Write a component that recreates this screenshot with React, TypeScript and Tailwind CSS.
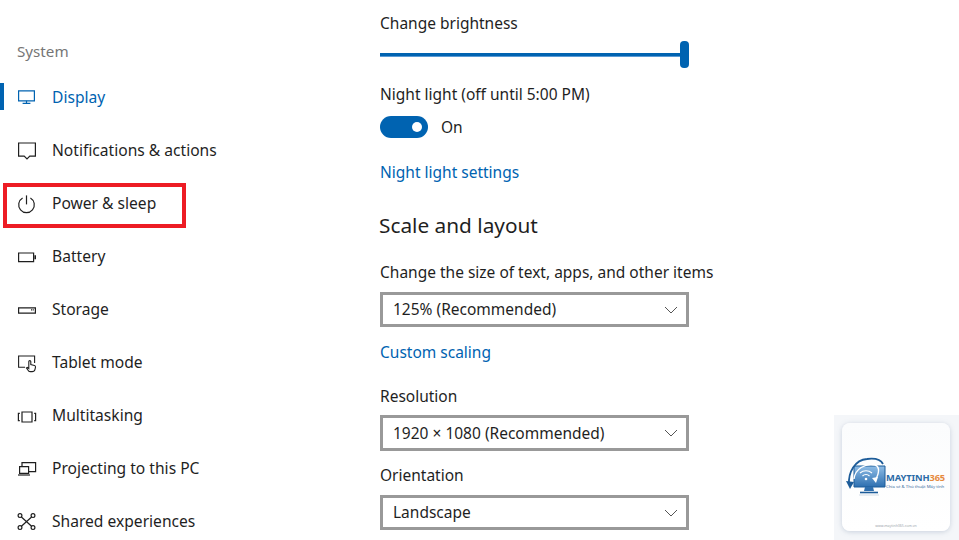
import { ReactNode } from "react";

const navIcon = "w-5 h-5 shrink-0 fill-none stroke-current";

function DisplayIcon() {
  return (
    <svg viewBox="0 0 20 20" className={navIcon} strokeWidth="1.2">
      <path d="M1.6 2.8h15.8v10H1.6z" />
      <path d="M9.5 12.8v2.6M5.6 15.4h7.8" />
    </svg>
  );
}

function NotificationIcon() {
  return (
    <svg viewBox="0 0 20 20" className={navIcon} strokeWidth="1.2">
      <path d="M1.6 2h16.8v13.2h-5.6L10 18l-2.8-2.8H1.6z" />
    </svg>
  );
}

function PowerIcon() {
  return (
    <svg viewBox="0 0 20 20" className={navIcon} strokeWidth="1.2">
      <path d="M5.6 4a7.8 7.8 0 1 0 7.8 0" />
      <path d="M9.5 1.4v9" />
    </svg>
  );
}

function BatteryIcon() {
  return (
    <svg viewBox="0 0 20 20" className={navIcon} strokeWidth="1.2">
      <path d="M1.6 6h15v8.6h-15z" />
      <path d="M18.2 8.2v4" strokeWidth="1.6" />
    </svg>
  );
}

function StorageIcon() {
  return (
    <svg viewBox="0 0 20 20" className={navIcon} strokeWidth="1.2">
      <path d="M1.6 7.8h16.8v5.4H1.6z" />
      <path d="M14 9.8h1.4M16 9.8h.8" />
    </svg>
  );
}

function TabletIcon() {
  return (
    <svg viewBox="0 0 20 20" className={navIcon} strokeWidth="1.1">
      <path d="M8 14.2H1.6V3h16v7" />
      <path d="M11.6 18l-2.2-3 1-.6 1.4 1.1V8.6a1 1 0 0 1 2 0v3l3.6.9c.8.2 1.2.8 1.1 1.6l-.5 2.2a3 3 0 0 1-2.9 2.3h-1.4a2.8 2.8 0 0 1-2.1-.6z" />
    </svg>
  );
}

function MultitaskIcon() {
  return (
    <svg viewBox="0 0 20 20" className={navIcon} strokeWidth="1.2">
      <path d="M5 6h10v10H5z" />
      <path d="M2.8 7.4H1.4v7.2h1.4M17.2 7.4h1.4v7.2h-1.4" />
    </svg>
  );
}

function ProjectIcon() {
  return (
    <svg viewBox="0 0 20 20" className={navIcon} strokeWidth="1.2">
      <path d="M5 7V3.6h13.6v9H12" />
      <path d="M2.6 7.6h9v6.8h-9z" />
      <path d="M1 16h12" />
    </svg>
  );
}

function SharedIcon() {
  return (
    <svg viewBox="0 0 20 20" className={navIcon} strokeWidth="1.2">
      <circle cx="3" cy="3.6" r="1.9" />
      <circle cx="16" cy="3.6" r="1.9" />
      <circle cx="3" cy="15.6" r="1.9" />
      <circle cx="16" cy="15.6" r="1.9" />
      <path d="M4.4 5l10.2 9.2M14.6 5L4.4 14.2" />
    </svg>
  );
}

function NavItem({ icon, label, active }: { icon: ReactNode; label: string; active?: boolean }) {
  return (
    <div className={`relative h-[53px] flex items-center gap-[15px] pl-[17px] text-[15.6px] ${active ? "text-[#0063b1]" : "text-[#1f1f1f]"}`}>
      {active && <div className="absolute left-0 top-[12px] w-[4px] h-[27px] bg-[#0063b1]" />}
      {icon}
      <span>{label}</span>
    </div>
  );
}

function Select({ value, className }: { value: string; className: string }) {
  return (
    <div className={`w-[309px] border-[3px] border-[#999999] flex items-center justify-between pl-[10px] pr-[8px] text-[#1f1f1f] ${className}`}>
      <span className="-mt-[1px]">{value}</span>
      <svg viewBox="0 0 14 8" className="w-[14px] h-[8px] fill-none stroke-[#555555]" strokeWidth="1">
        <path d="M1 1l6 6 6-6" />
      </svg>
    </div>
  );
}

function Watermark() {
  return (
    <div className="absolute right-0 bottom-0 w-[125px] h-[125px] bg-[#f4f6f9] p-[8px]">
      <div className="relative w-[108px] h-[108px] rounded-[8px] bg-gradient-to-b from-[#fbfcfd] to-[#ffffff] shadow-[0_1px_5px_rgba(120,140,170,0.35)]">
        <svg viewBox="0 0 45 45" className="absolute left-[3px] top-[32px] w-[45px] h-[45px] fill-none">
          <defs>
            <linearGradient id="screen" x1="0" y1="0" x2="0" y2="1">
              <stop offset="0" stopColor="#8fbde6" />
              <stop offset="1" stopColor="#2d6fb0" />
            </linearGradient>
          </defs>
          <path d="M9 11h31v21H9z" fill="url(#screen)" stroke="#1d5c99" strokeWidth="1" />
          <path d="M20 32h8l1 4H19z" fill="#2f6fae" />
          <path d="M15 37.5h18" stroke="#1d5c99" strokeWidth="1.6" />
          <path d="M14 40h20" stroke="#dfe5ec" strokeWidth="1.4" />
          <path d="M4 30C3 17 10 5 22 4c8-1 14 1 16 5" stroke="#1d5c99" strokeWidth="1.8" />
          <path d="M1 26l8 1-4 7z" fill="#1d5c99" />
          <path d="M9 24c1-10 11-16 21-14 4 1 5 6 1 14" stroke="#ffffff" strokeWidth="1.4" />
          <path d="M27 23l6-1-2 6z" fill="#ffffff" />
          <path d="M15 18a9 9 0 0 1 12 0M17.5 21a5 5 0 0 1 7 0" stroke="#ffffff" strokeWidth="1.1" />
          <circle cx="21" cy="24" r="1.3" fill="#ffffff" />
        </svg>
        <div className="absolute left-[44px] top-[48px] whitespace-nowrap text-[9.3px] leading-[13px] font-bold tracking-[-0.1px] text-[#2a6aa6]">
          MAYTINH<span className="text-[#e68a3e]">365</span>
        </div>
        <div className="absolute left-[44px] top-[60px] whitespace-nowrap text-[4.3px] leading-[7px] text-[#3f6f9e]">
          Chia sẻ & Thủ thuật Máy tính
        </div>
        <div className="absolute left-0 right-0 top-[100px] text-center text-[3.5px] leading-[5px] text-[#a0a6ad]">
          www.maytinh365.com.vn
        </div>
      </div>
    </div>
  );
}

export default function App() {
  return (
    <div className="relative w-[959px] h-[540px] overflow-hidden bg-white flex font-['Noto_Sans',sans-serif]">
      <div className="w-[380px] shrink-0">
        <div className="pl-[17px] pt-[39px] h-[71px] text-[15.2px] leading-[24px] text-[#767676]">System</div>
        <NavItem icon={<DisplayIcon />} label="Display" active />
        <NavItem icon={<NotificationIcon />} label="Notifications & actions" />
        <div className="relative">
          <NavItem icon={<PowerIcon />} label="Power & sleep" />
          <div className="absolute left-[3px] top-[6px] w-[183px] h-[45px] border-[4px] border-[#ed1c24]" />
        </div>
        <NavItem icon={<BatteryIcon />} label="Battery" />
        <NavItem icon={<StorageIcon />} label="Storage" />
        <NavItem icon={<TabletIcon />} label="Tablet mode" />
        <NavItem icon={<MultitaskIcon />} label="Multitasking" />
        <NavItem icon={<ProjectIcon />} label="Projecting to this PC" />
        <NavItem icon={<SharedIcon />} label="Shared experiences" />
      </div>

      <div className="w-[345px] pt-[11px] text-[15.5px] leading-[24px] text-[#1f1f1f] whitespace-nowrap">
        <div>Change brightness</div>
        <div className="mt-[6px] w-[309px] h-[27px] flex items-center">
          <div className="flex-1 h-[4px] bg-[#0063b1] border-b border-[#5b9bd5]" />
          <div className="w-[9px] h-[27px] rounded-[4px] bg-[#0063b1]" />
        </div>
        <div className="mt-[14px]">Night light (off until 5:00 PM)</div>
        <div className="mt-[10px] h-[22px] flex items-center gap-[13px]">
          <div className="w-[48px] h-[22px] rounded-full bg-[#0063b1] flex items-center justify-end pr-[6px]">
            <div className="w-[10px] h-[10px] rounded-full bg-white" />
          </div>
          <span>On</span>
        </div>
        <div className="mt-[22px] text-[#0063b1]">Night light settings</div>
        <div className="mt-[25px] -ml-px text-[20.8px] leading-[32px]">Scale and layout</div>
        <div className="mt-[19px]">Change the size of text, apps, and other items</div>
        <Select value="125% (Recommended)" className="mt-[8px] h-[35px]" />
        <div className="mt-[13px] text-[#0063b1]">Custom scaling</div>
        <div className="mt-[20px]">Resolution</div>
        <Select value="1920 × 1080 (Recommended)" className="mt-[7px] h-[36px]" />
        <div className="mt-[12px]">Orientation</div>
        <Select value="Landscape" className="mt-[8px] h-[35px]" />
      </div>

      <Watermark />
    </div>
  );
}
